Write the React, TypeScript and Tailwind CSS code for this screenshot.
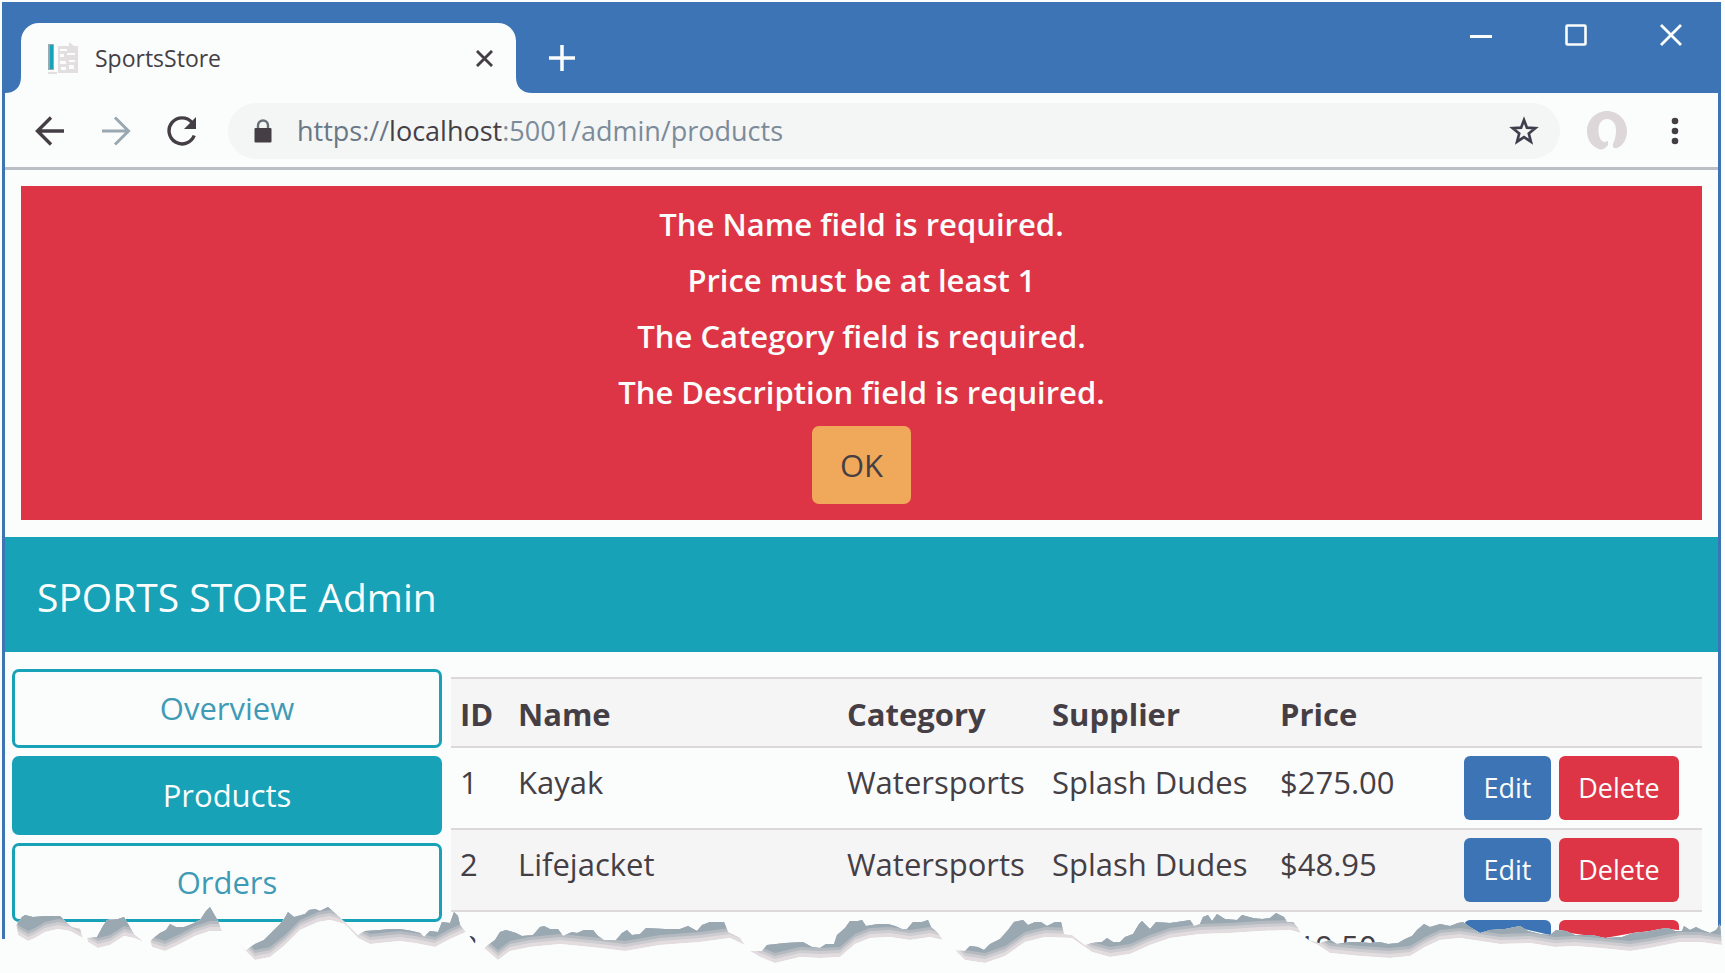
import type { ReactNode } from "react";

const errors = [
  "The Name field is required.",
  "Price must be at least 1",
  "The Category field is required.",
  "The Description field is required.",
];

const navItems = [
  { label: "Overview", active: false },
  { label: "Products", active: true },
  { label: "Orders", active: false },
];

const products = [
  { id: 1, name: "Kayak", category: "Watersports", supplier: "Splash Dudes", price: "$275.00" },
  { id: 2, name: "Lifejacket", category: "Watersports", supplier: "Splash Dudes", price: "$48.95" },
  { id: 3, name: "", category: "", supplier: "", price: "$19.50" },
];

const tornPieces = [
  "M16 925 22 917 25 915 33 917 45 916 60 916 66 922 72 927 80 929 83 938 70 931 58 929 45 932 35 938 28 941 18 935Z",
  "M87 938 97 937 103 926 107 920 118 919 124 917 128 924 134 934 144 942 134 938 124 936 110 945 98 948 88 942Z",
  "M150 941 160 933 166 930 170 924 176 927 184 927 192 924 200 920 206 911 210 907 214 914 218 921 222 931 210 931 195 936 180 944 165 951 152 947Z",
  "M240 945 246 950 255 944 264 940 272 932 280 924 284 919 288 912 294 917 305 914 309 910 315 909 320 911 328 907 336 914 345 922 358 935 365 931 380 930 390 929 400 929 412 931 420 933 424 937 430 931 438 932 442 922 450 923 454 912 458 916 460 925 466 932 450 939 435 947 415 943 400 941 370 944 358 938 345 924 330 920 318 922 300 930 285 945 270 957 255 960Z",
  "M484 948 495 940 500 932 506 930 516 933 522 936 533 935 540 927 544 926 550 929 558 929 563 936 572 932 577 933 584 930 593 930 598 936 604 940 616 940 622 933 627 930 632 935 640 934 646 928 665 929 680 929 688 926 697 931 702 925 710 922 724 922 728 932 740 938 745 945 730 938 700 942 660 945 625 951 600 948 560 944 530 947 510 951 498 960Z",
  "M750 951 762 951 767 945 785 943 803 942 812 947 820 948 826 944 834 944 837 935 845 928 850 921 858 921 862 920 866 926 878 924 888 924 895 926 902 929 907 929 913 922 922 922 928 920 931 927 938 933 943 940 930 937 910 940 890 937 870 938 855 944 840 957 820 958 800 957 775 963 760 957Z",
  "M955 950 965 951 970 946 978 947 984 950 990 944 1000 939 1008 930 1014 922 1023 920 1028 925 1035 922 1041 922 1047 926 1055 922 1061 922 1064 934 1072 935 1085 945 1092 943 1102 942 1107 938 1113 942 1120 942 1125 937 1133 934 1139 924 1142 921 1150 929 1156 922 1170 923 1184 921 1190 920 1194 926 1200 924 1203 917 1208 915 1212 921 1217 914 1225 919 1237 920 1242 915 1253 918 1262 919 1270 918 1276 913 1284 917 1287 922 1293 922 1298 928 1301 933 1290 930 1260 931 1230 933 1200 934 1170 938 1150 945 1130 954 1110 957 1092 952 1072 938 1045 937 1025 942 1005 956 985 963 965 960Z",
  "M1302 937 1310 940 1320 943 1330 940 1337 944 1350 942 1360 942 1370 943 1380 942 1388 944 1398 943 1405 939 1412 936 1417 930 1424 924 1430 927 1440 924 1450 926 1458 923 1463 922 1470 927 1480 933 1490 930 1505 929 1520 926 1528 931 1540 934 1550 935 1556 930 1566 931 1575 935 1592 935 1605 938 1622 937 1633 933 1645 932 1660 929 1668 928 1675 931 1682 931 1684 926 1690 930 1696 927 1702 930 1710 933 1716 930 1720 924 1722 945 1700 942 1680 942 1650 948 1630 951 1600 948 1575 946 1555 947 1530 943 1500 944 1480 941 1460 938 1440 940 1425 947 1410 956 1390 958 1360 956 1330 953 1318 945Z",
];

const tornShades = [
  { fill: "#e2dcdf", lift: 0 },
  { fill: "#cdccd0", lift: 4 },
  { fill: "#b4bac0", lift: 7 },
  { fill: "#9aa8b2", lift: 10 },
];

const paperEdge =
  "M0 939 14 939 16 925 22 917 33 917 60 916 66 922 80 929 87 938 97 937 107 920 124 917 134 934 144 942 150 941 160 933 170 924 184 927 200 920 210 909 218 921 224 936 240 947 246 950 264 940 280 924 288 914 305 914 328 909 345 922 358 935 380 930 412 931 424 937 430 931 440 932 444 923 450 923 454 914 460 925 468 934 476 945 484 948 495 940 506 931 533 935 544 927 563 936 593 931 604 940 616 940 627 931 646 929 680 929 710 923 724 923 728 932 745 945 762 951 767 945 803 942 812 947 834 944 850 923 888 924 902 929 913 923 928 922 943 940 955 950 984 950 1000 939 1014 924 1061 923 1072 935 1085 945 1120 942 1133 934 1142 924 1190 922 1208 918 1276 916 1293 922 1301 934 1310 941 1320 944 1337 945 1398 944 1412 936 1424 926 1463 924 1480 933 1520 928 1550 935 1556 931 1605 938 1633 933 1668 929 1710 933 1720 926 1725 926 1725 973 0 973Z";

function IconButton({ label, className, children }: { label: string; className?: string; children: ReactNode }) {
  return (
    <button type="button" aria-label={label} className={`flex items-center justify-center ${className ?? ""}`}>
      {children}
    </button>
  );
}

function TitleBar() {
  return (
    <div className="flex h-[91px] items-stretch bg-[#3d74b5] text-[#fbfdfc]">
      <div className="mt-[21px] flex items-end">
        <svg width="16" height="16" viewBox="0 0 16 16" aria-hidden="true">
          <path d="M16 0v16H0C10 16 16 10 16 0Z" fill="#fbfdfc" />
        </svg>
        <div className="flex h-[70px] w-[495px] items-center rounded-t-[18px] bg-[#fbfdfc] pr-[18px] pl-[26px] text-[#453f45]">
          <svg width="32" height="34" viewBox="0 0 32 34" aria-hidden="true">
            <path d="M1 3h6v26H1z" fill="#9aa8b2" />
            <path d="M3 4h3v24H3z" fill="#17a2b8" />
            <path d="M11 5h11V1l5 4h4v27H11zM1 31h9v2H1z" fill="#e3dee0" />
            <path d="M13 8h7v2h-7zM13 13h4v3h-4zM20 12h8v2h-8zM13 20h6v3h-6zM22 19h6v2h-6zM22 24h5v4h-5zM14 26h5v3h-5z" fill="#fbfdfc" />
          </svg>
          <span className="ml-4 flex-1 text-[23px] leading-8">SportsStore</span>
          <IconButton label="Close tab" className="size-7">
            <svg width="17" height="17" viewBox="0 0 18 18" stroke="#453f45" strokeWidth="3" aria-hidden="true">
              <path d="M1 1l16 16M17 1 1 17" />
            </svg>
          </IconButton>
        </div>
        <svg width="16" height="16" viewBox="0 0 16 16" aria-hidden="true">
          <path d="M0 0v16h16C6 16 0 10 0 0Z" fill="#fbfdfc" />
        </svg>
      </div>
      <IconButton label="New tab" className="mt-[21px] ml-[10px] h-[70px] w-10">
        <svg width="26" height="26" viewBox="0 0 26 26" stroke="currentColor" strokeWidth="3.5" aria-hidden="true">
          <path d="M13 0v26M0 13h26" />
        </svg>
      </IconButton>
      <div className="ml-auto flex h-[66px] items-center gap-[55px] pr-[27px]">
        <IconButton label="Minimize" className="size-10">
          <svg width="22" height="22" viewBox="0 0 22 22" aria-hidden="true">
            <path d="M0 12.500h22" stroke="currentColor" strokeWidth="3" />
          </svg>
        </IconButton>
        <IconButton label="Maximize" className="size-10">
          <svg width="22" height="22" viewBox="0 0 22 22" aria-hidden="true">
            <rect x="1.5" y="1.5" width="19" height="19" rx="1" fill="none" stroke="currentColor" strokeWidth="2.6" />
          </svg>
        </IconButton>
        <IconButton label="Close" className="size-10">
          <svg width="22" height="22" viewBox="0 0 22 22" aria-hidden="true">
            <path d="M1 1l20 20M21 1 1 21" stroke="currentColor" strokeWidth="2.8" />
          </svg>
        </IconButton>
      </div>
    </div>
  );
}

function Toolbar() {
  return (
    <div className="flex h-[77px] items-center border-b-[3px] border-[#b9bfc4] pt-[2px] pr-[27px] pl-[27px] text-[#453f45]">
      <IconButton label="Back" className="w-9">
        <svg width="30" height="30" viewBox="0 0 30 30" fill="none" stroke="currentColor" strokeWidth="3.4" aria-hidden="true">
          <path d="M29 15H3M16 1.500 2.500 15 16 28.500" />
        </svg>
      </IconButton>
      <IconButton label="Forward" className="ml-[30px] w-9">
        <svg width="30" height="30" viewBox="0 0 30 30" fill="none" stroke="#9aa8b2" strokeWidth="3" aria-hidden="true">
          <path d="M1 15h26M14 1.500 27.500 15 14 28.500" />
        </svg>
      </IconButton>
      <IconButton label="Reload" className="ml-[30px] w-9">
        <svg width="30" height="30" viewBox="0 0 30 30" aria-hidden="true">
          <path d="M27.200 19.500A13 13 0 1 1 25 6.500" fill="none" stroke="currentColor" strokeWidth="3.400" />
          <path d="M29 1v12H17Z" fill="currentColor" />
        </svg>
      </IconButton>
      <div className="ml-7 flex h-14 min-w-0 flex-1 items-center rounded-full bg-[#f4f5f5] pr-5 pl-[26px]">
        <svg width="18" height="24" viewBox="0 0 18 24" className="shrink-0" aria-hidden="true">
          <path d="M4 11V6.500a5 5 0 0 1 10 0V11" fill="none" stroke="#6a7078" strokeWidth="2.400" />
          <rect x="0.500" y="9" width="17" height="14.500" rx="1" fill="#453f45" />
        </svg>
        <a href="https://localhost:5001/admin/products" className="ml-[25px] flex-1 truncate text-[27px] leading-10 text-[#7c8b99]">
          <span className="text-[#6a7785]">https://</span>
          <span className="text-[#453f45]">localhost</span>:5001/admin/products
        </a>
        <IconButton label="Bookmark this page">
          <svg width="32" height="32" viewBox="0 0 24 24" fill="none" stroke="#3d3f4c" strokeWidth="2" aria-hidden="true">
            <path d="m12 3.800 2.200 5.700 6.300.400-4.900 4 1.600 6.100-5.200-3.400L6.800 20l1.600-6.100-4.900-4 6.300-.400Z" />
          </svg>
        </IconButton>
      </div>
      <IconButton label="Profile" className="ml-[27px]">
        <svg width="40" height="40" viewBox="0 0 40 40" aria-hidden="true">
          <path
            d="M13 38.500C5 36 0 29 0 20 0 9 9 0 20 0s20 9 20 20c0 8-4 15-10 17-3 1-5-1-4-4 2-4 3-9 3-14 0-7-4-11-9-11s-8.500 4-8.500 11c0 6 1.500 10 5.500 12l4-1v4c-2 3-5 5-8 4.500Z"
            fill="#ddd7da"
          />
        </svg>
      </IconButton>
      <IconButton label="Menu" className="ml-8 w-8">
        <svg width="8" height="28" viewBox="0 0 8 28" fill="currentColor" aria-hidden="true">
          <circle cx="4" cy="4" r="3.300" />
          <circle cx="4" cy="14" r="3.300" />
          <circle cx="4" cy="24" r="3.300" />
        </svg>
      </IconButton>
    </div>
  );
}

function TornEdge() {
  return (
    <svg
      className="pointer-events-none absolute inset-x-0 bottom-0 h-[73px] w-full"
      viewBox="0 900 1725 73"
      preserveAspectRatio="none"
      aria-hidden="true"
    >
      <path d={paperEdge} fill="#fbfdfc" />
      {tornPieces.map((d, i) => (
        <g key={i}>
          <clipPath id={`torn-${i}`}>
            <path d={d} />
          </clipPath>
          <g clipPath={`url(#torn-${i})`}>
            {tornShades.map((shade) => (
              <path key={shade.lift} d={d} fill={shade.fill} transform={`translate(0 ${-shade.lift})`} />
            ))}
          </g>
        </g>
      ))}
    </svg>
  );
}

export default function App() {
  return (
    <div className="relative h-screen overflow-hidden bg-[#fbfdfc] px-[2px] pt-[2px] font-['Open_Sans','Noto_Sans',sans-serif] text-[#453f45]">
      <div className="mr-[2px] min-h-full border-x-[3px] border-[#3d74b5]">
        <TitleBar />
        <Toolbar />
        <div role="alert" className="mx-4 mt-4 flex flex-col items-center bg-[#dd3545] pt-3 pb-4 text-[31px] font-semibold text-[#fbfdfc]">
          {errors.map((message) => (
            <p key={message} className="h-14 leading-[52px]">
              {message}
            </p>
          ))}
          <button type="button" className="mt-1 h-[78px] w-[99px] rounded-[7px] bg-[#f0a95a] text-[31px] font-normal text-[#453f45]">
            OK
          </button>
        </div>
        <header className="mt-[17px] flex h-[115px] items-center bg-[#17a2b8] px-8 pt-1 text-[#fbfdfc]">
          <h1 className="text-[39px] leading-[60px]">SPORTS STORE Admin</h1>
        </header>
        <div className="flex items-start gap-[9px] pr-4 pl-[7px]">
          <nav className="mt-[17px] flex w-[430px] shrink-0 flex-col gap-2">
            {navItems.map((item) => (
              <a
                key={item.label}
                href={`#${item.label.toLowerCase()}`}
                className={`flex h-[79px] items-center justify-center rounded-[7px] border-[3px] border-[#17a2b8] text-[31px] ${
                  item.active ? "bg-[#17a2b8] text-[#fbfdfc]" : "text-[#3f9bb5]"
                }`}
              >
                {item.label}
              </a>
            ))}
          </nav>
          <table className="mt-[25px] min-w-0 flex-1 table-fixed border-collapse text-left text-[31px] leading-[46px]">
            <colgroup>
              <col className="w-[58px]" />
              <col />
              <col className="w-[205px]" />
              <col className="w-[228px]" />
              <col className="w-[184px]" />
              <col className="w-[247px]" />
            </colgroup>
            <thead>
              <tr className="h-[69px] border-y-2 border-[#ddd9db] bg-[#f5f5f6]">
                <th className="pt-[2px] pl-[9px] font-bold">ID</th>
                <th className="pt-[2px] pl-[9px] font-bold">Name</th>
                <th className="pt-[2px] pl-[9px] font-bold">Category</th>
                <th className="pt-[2px] pl-[9px] font-bold">Supplier</th>
                <th className="pt-[2px] pl-[9px] font-bold">Price</th>
                <td />
              </tr>
            </thead>
            <tbody>
              {products.map((p) => (
                <tr key={p.id} className="h-[82px] border-t-2 border-[#ddd9db] align-top even:bg-[#f5f5f6]">
                  <td className="pt-[11px] pl-[9px]">{p.id}</td>
                  <td className="pt-[11px] pl-[9px]">{p.name}</td>
                  <td className="pt-[11px] pl-[9px] whitespace-nowrap">{p.category}</td>
                  <td className="pt-[11px] pl-[9px] whitespace-nowrap">{p.supplier}</td>
                  <td className="pt-[11px] pl-[9px]">{p.price}</td>
                  <td className="pt-2 pl-[9px]">
                    <div className="flex gap-2 text-[27px] leading-9 text-[#fbfdfc]">
                      <button type="button" className="h-16 w-[87px] rounded-[6px] bg-[#3d74b5]">
                        Edit
                      </button>
                      <button type="button" className="h-16 w-[120px] rounded-[6px] bg-[#dd3545]">
                        Delete
                      </button>
                    </div>
                  </td>
                </tr>
              ))}
            </tbody>
          </table>
        </div>
      </div>
      <TornEdge />
    </div>
  );
}
